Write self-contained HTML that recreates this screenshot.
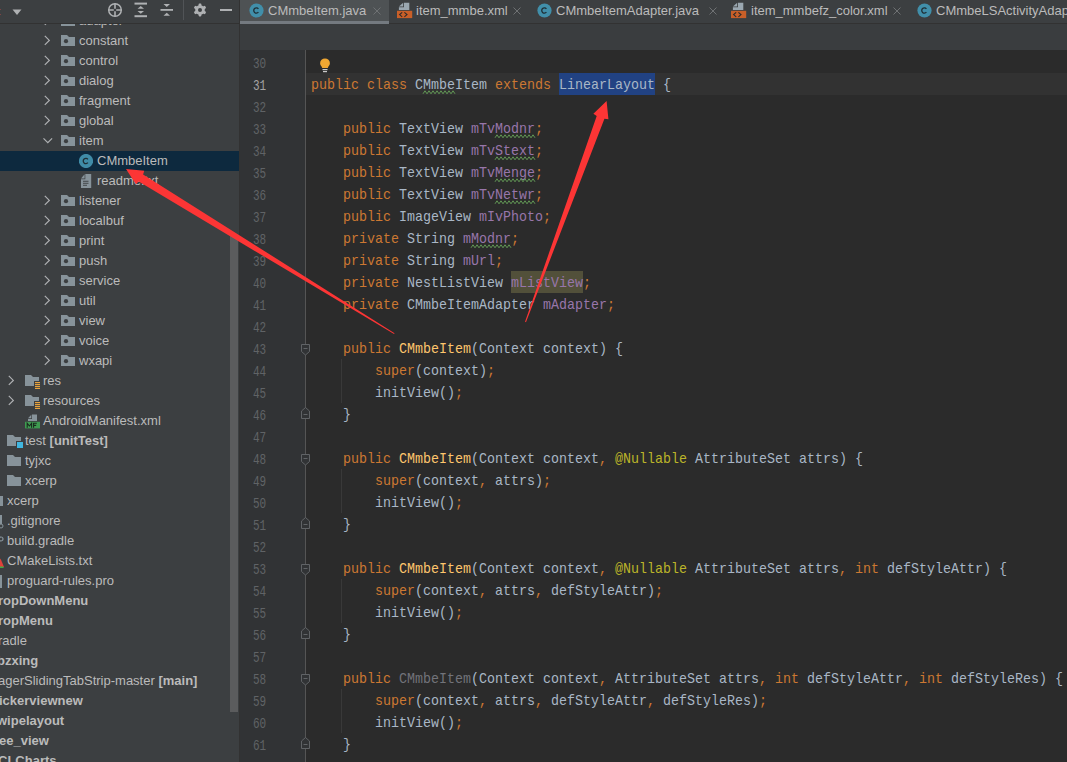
<!DOCTYPE html>
<html><head><meta charset="utf-8"><style>
html,body{margin:0;padding:0;}
body{width:1067px;height:762px;overflow:hidden;position:relative;background:#3C3F41;font-family:"Liberation Sans",sans-serif;}
.a{position:absolute;}
.t{position:absolute;height:20px;line-height:20px;font-size:13px;color:#BBBBBB;white-space:nowrap;}
.tt{position:absolute;top:0;height:21px;line-height:21px;font-size:13px;color:#BBBBBB;white-space:nowrap;}
.ln{position:absolute;left:253px;margin-top:1px;height:22px;line-height:22px;font-family:"Liberation Mono",monospace;font-size:11px;transform:scaleY(1.3);transform-origin:0 7px;}
.cl{position:absolute;left:311px;height:22px;line-height:22px;padding-top:1.5px;transform:scaleY(1.08);transform-origin:0 16px;font-family:"Liberation Mono",monospace;font-size:13.33px;white-space:pre;}
.cl span{display:inline-block;height:22px;}
</style></head><body>
<div class="a" style="left:0;top:0;width:239px;height:762px;background:#3C3F41"></div>
<svg class="a" style="left:43px;top:15px" width="10" height="12" viewBox="0 0 10 12"><path d="M1.8 0.9 L6.3 5.4 L1.8 9.9" fill="none" stroke="#AFB1B3" stroke-width="1.2"/></svg><svg class="a" style="left:61px;top:15px" width="15" height="12" viewBox="0 0 15 12"><path d="M0 0 H6 L8 2 H14 V11 H0 Z" fill="#87939A"/><circle cx="5" cy="6.2" r="2.1" fill="#3C3F41"/></svg><div class="t" style="left:79px;top:11px;">adapter</div><svg class="a" style="left:43px;top:35px" width="10" height="12" viewBox="0 0 10 12"><path d="M1.8 0.9 L6.3 5.4 L1.8 9.9" fill="none" stroke="#AFB1B3" stroke-width="1.2"/></svg><svg class="a" style="left:61px;top:35px" width="15" height="12" viewBox="0 0 15 12"><path d="M0 0 H6 L8 2 H14 V11 H0 Z" fill="#87939A"/><circle cx="5" cy="6.2" r="2.1" fill="#3C3F41"/></svg><div class="t" style="left:79px;top:31px;">constant</div><svg class="a" style="left:43px;top:55px" width="10" height="12" viewBox="0 0 10 12"><path d="M1.8 0.9 L6.3 5.4 L1.8 9.9" fill="none" stroke="#AFB1B3" stroke-width="1.2"/></svg><svg class="a" style="left:61px;top:55px" width="15" height="12" viewBox="0 0 15 12"><path d="M0 0 H6 L8 2 H14 V11 H0 Z" fill="#87939A"/><circle cx="5" cy="6.2" r="2.1" fill="#3C3F41"/></svg><div class="t" style="left:79px;top:51px;">control</div><svg class="a" style="left:43px;top:75px" width="10" height="12" viewBox="0 0 10 12"><path d="M1.8 0.9 L6.3 5.4 L1.8 9.9" fill="none" stroke="#AFB1B3" stroke-width="1.2"/></svg><svg class="a" style="left:61px;top:75px" width="15" height="12" viewBox="0 0 15 12"><path d="M0 0 H6 L8 2 H14 V11 H0 Z" fill="#87939A"/><circle cx="5" cy="6.2" r="2.1" fill="#3C3F41"/></svg><div class="t" style="left:79px;top:71px;">dialog</div><svg class="a" style="left:43px;top:95px" width="10" height="12" viewBox="0 0 10 12"><path d="M1.8 0.9 L6.3 5.4 L1.8 9.9" fill="none" stroke="#AFB1B3" stroke-width="1.2"/></svg><svg class="a" style="left:61px;top:95px" width="15" height="12" viewBox="0 0 15 12"><path d="M0 0 H6 L8 2 H14 V11 H0 Z" fill="#87939A"/><circle cx="5" cy="6.2" r="2.1" fill="#3C3F41"/></svg><div class="t" style="left:79px;top:91px;">fragment</div><svg class="a" style="left:43px;top:115px" width="10" height="12" viewBox="0 0 10 12"><path d="M1.8 0.9 L6.3 5.4 L1.8 9.9" fill="none" stroke="#AFB1B3" stroke-width="1.2"/></svg><svg class="a" style="left:61px;top:115px" width="15" height="12" viewBox="0 0 15 12"><path d="M0 0 H6 L8 2 H14 V11 H0 Z" fill="#87939A"/><circle cx="5" cy="6.2" r="2.1" fill="#3C3F41"/></svg><div class="t" style="left:79px;top:111px;">global</div><svg class="a" style="left:42px;top:136px" width="12" height="10" viewBox="0 0 12 10"><path d="M1.5 2.3 L5.8 6.6 L10.1 2.3" fill="none" stroke="#AFB1B3" stroke-width="1.2"/></svg><svg class="a" style="left:61px;top:135px" width="15" height="12" viewBox="0 0 15 12"><path d="M0 0 H6 L8 2 H14 V11 H0 Z" fill="#87939A"/><circle cx="5" cy="6.2" r="2.1" fill="#3C3F41"/></svg><div class="t" style="left:79px;top:131px;">item</div><div class="a" style="left:0;top:151px;width:239px;height:20px;background:#0D293E"></div><svg class="a" style="left:79px;top:154px" width="14" height="14" viewBox="0 0 14 14"><circle cx="7" cy="7" r="7.1" fill="#408CA8"/><path d="M8.9 5.4 A2.6 2.6 0 1 0 8.9 8.6" fill="none" stroke="#1F2F36" stroke-width="1.3"/></svg><div class="t" style="left:97px;top:151px;">CMmbeItem</div><svg class="a" style="left:81px;top:174px" width="11" height="15" viewBox="0 0 11 15"><path d="M4.3 0 H10.2 V13.9 H0 V5.2 H4.3 Z" fill="#87939A"/><path d="M0 4.4 L3.6 0.3 V4.4 Z" fill="#87939A"/><g fill="#3C3F41"><rect x="2" y="6.8" width="5.5" height="0.9"/><rect x="2" y="8.8" width="5.5" height="0.9"/><rect x="2" y="10.8" width="4" height="0.9"/></g></svg><div class="t" style="left:97px;top:171px;">readme.txt</div><svg class="a" style="left:43px;top:195px" width="10" height="12" viewBox="0 0 10 12"><path d="M1.8 0.9 L6.3 5.4 L1.8 9.9" fill="none" stroke="#AFB1B3" stroke-width="1.2"/></svg><svg class="a" style="left:61px;top:195px" width="15" height="12" viewBox="0 0 15 12"><path d="M0 0 H6 L8 2 H14 V11 H0 Z" fill="#87939A"/><circle cx="5" cy="6.2" r="2.1" fill="#3C3F41"/></svg><div class="t" style="left:79px;top:191px;">listener</div><svg class="a" style="left:43px;top:215px" width="10" height="12" viewBox="0 0 10 12"><path d="M1.8 0.9 L6.3 5.4 L1.8 9.9" fill="none" stroke="#AFB1B3" stroke-width="1.2"/></svg><svg class="a" style="left:61px;top:215px" width="15" height="12" viewBox="0 0 15 12"><path d="M0 0 H6 L8 2 H14 V11 H0 Z" fill="#87939A"/><circle cx="5" cy="6.2" r="2.1" fill="#3C3F41"/></svg><div class="t" style="left:79px;top:211px;">localbuf</div><svg class="a" style="left:43px;top:235px" width="10" height="12" viewBox="0 0 10 12"><path d="M1.8 0.9 L6.3 5.4 L1.8 9.9" fill="none" stroke="#AFB1B3" stroke-width="1.2"/></svg><svg class="a" style="left:61px;top:235px" width="15" height="12" viewBox="0 0 15 12"><path d="M0 0 H6 L8 2 H14 V11 H0 Z" fill="#87939A"/><circle cx="5" cy="6.2" r="2.1" fill="#3C3F41"/></svg><div class="t" style="left:79px;top:231px;">print</div><svg class="a" style="left:43px;top:255px" width="10" height="12" viewBox="0 0 10 12"><path d="M1.8 0.9 L6.3 5.4 L1.8 9.9" fill="none" stroke="#AFB1B3" stroke-width="1.2"/></svg><svg class="a" style="left:61px;top:255px" width="15" height="12" viewBox="0 0 15 12"><path d="M0 0 H6 L8 2 H14 V11 H0 Z" fill="#87939A"/><circle cx="5" cy="6.2" r="2.1" fill="#3C3F41"/></svg><div class="t" style="left:79px;top:251px;">push</div><svg class="a" style="left:43px;top:275px" width="10" height="12" viewBox="0 0 10 12"><path d="M1.8 0.9 L6.3 5.4 L1.8 9.9" fill="none" stroke="#AFB1B3" stroke-width="1.2"/></svg><svg class="a" style="left:61px;top:275px" width="15" height="12" viewBox="0 0 15 12"><path d="M0 0 H6 L8 2 H14 V11 H0 Z" fill="#87939A"/><circle cx="5" cy="6.2" r="2.1" fill="#3C3F41"/></svg><div class="t" style="left:79px;top:271px;">service</div><svg class="a" style="left:43px;top:295px" width="10" height="12" viewBox="0 0 10 12"><path d="M1.8 0.9 L6.3 5.4 L1.8 9.9" fill="none" stroke="#AFB1B3" stroke-width="1.2"/></svg><svg class="a" style="left:61px;top:295px" width="15" height="12" viewBox="0 0 15 12"><path d="M0 0 H6 L8 2 H14 V11 H0 Z" fill="#87939A"/><circle cx="5" cy="6.2" r="2.1" fill="#3C3F41"/></svg><div class="t" style="left:79px;top:291px;">util</div><svg class="a" style="left:43px;top:315px" width="10" height="12" viewBox="0 0 10 12"><path d="M1.8 0.9 L6.3 5.4 L1.8 9.9" fill="none" stroke="#AFB1B3" stroke-width="1.2"/></svg><svg class="a" style="left:61px;top:315px" width="15" height="12" viewBox="0 0 15 12"><path d="M0 0 H6 L8 2 H14 V11 H0 Z" fill="#87939A"/><circle cx="5" cy="6.2" r="2.1" fill="#3C3F41"/></svg><div class="t" style="left:79px;top:311px;">view</div><svg class="a" style="left:43px;top:335px" width="10" height="12" viewBox="0 0 10 12"><path d="M1.8 0.9 L6.3 5.4 L1.8 9.9" fill="none" stroke="#AFB1B3" stroke-width="1.2"/></svg><svg class="a" style="left:61px;top:335px" width="15" height="12" viewBox="0 0 15 12"><path d="M0 0 H6 L8 2 H14 V11 H0 Z" fill="#87939A"/><circle cx="5" cy="6.2" r="2.1" fill="#3C3F41"/></svg><div class="t" style="left:79px;top:331px;">voice</div><svg class="a" style="left:43px;top:355px" width="10" height="12" viewBox="0 0 10 12"><path d="M1.8 0.9 L6.3 5.4 L1.8 9.9" fill="none" stroke="#AFB1B3" stroke-width="1.2"/></svg><svg class="a" style="left:61px;top:355px" width="15" height="12" viewBox="0 0 15 12"><path d="M0 0 H6 L8 2 H14 V11 H0 Z" fill="#87939A"/><circle cx="5" cy="6.2" r="2.1" fill="#3C3F41"/></svg><div class="t" style="left:79px;top:351px;">wxapi</div><svg class="a" style="left:7px;top:375px" width="10" height="12" viewBox="0 0 10 12"><path d="M1.8 0.9 L6.3 5.4 L1.8 9.9" fill="none" stroke="#AFB1B3" stroke-width="1.2"/></svg><svg class="a" style="left:25px;top:375px" width="16" height="14" viewBox="0 0 16 14"><path d="M0 0 H6 L8 2 H14 V11 H0 Z" fill="#87939A"/><rect x="9" y="6" width="7" height="8" fill="#3C3F41"/><g fill="#E8A33D"><rect x="10" y="7" width="5" height="1.2"/><rect x="10" y="9" width="5" height="1.2"/><rect x="10" y="11" width="5" height="1.2"/><rect x="10" y="13" width="5" height="1"/></g></svg><div class="t" style="left:43px;top:371px;">res</div><svg class="a" style="left:7px;top:395px" width="10" height="12" viewBox="0 0 10 12"><path d="M1.8 0.9 L6.3 5.4 L1.8 9.9" fill="none" stroke="#AFB1B3" stroke-width="1.2"/></svg><svg class="a" style="left:25px;top:395px" width="16" height="14" viewBox="0 0 16 14"><path d="M0 0 H6 L8 2 H14 V11 H0 Z" fill="#87939A"/><rect x="9" y="6" width="7" height="8" fill="#3C3F41"/><g fill="#E8A33D"><rect x="10" y="7" width="5" height="1.2"/><rect x="10" y="9" width="5" height="1.2"/><rect x="10" y="11" width="5" height="1.2"/><rect x="10" y="13" width="5" height="1"/></g></svg><div class="t" style="left:43px;top:391px;">resources</div><svg class="a" style="left:25px;top:414px" width="16" height="15" viewBox="0 0 16 15"><path d="M7 0.5 H12 V7 H3 V5 H7 Z" fill="#87939A"/><path d="M3 4.3 L6.3 0.8 V4.3 Z" fill="#87939A"/><rect x="0" y="7.8" width="15" height="6.6" fill="#3E9A50"/><path d="M2.2 13.8 V9.3 L4.4 12 L6.6 9.3 V13.8 M8.6 13.8 V9.3 H11.8 M8.6 11.4 H11.2" fill="none" stroke="#1A2A1E" stroke-width="1.1"/></svg><div class="t" style="left:43px;top:411px;">AndroidManifest.xml</div><svg class="a" style="left:7px;top:435px" width="16" height="14" viewBox="0 0 16 14"><path d="M0 0 H6 L8 2 H14 V11 H0 Z" fill="#87939A"/><rect x="9" y="6" width="7" height="8" fill="#3C3F41"/><rect x="10" y="7" width="6" height="6" fill="#40B6E0"/></svg><div class="t" style="left:25px;top:431px;">test <b>[unitTest]</b></div><svg class="a" style="left:7px;top:455px" width="15" height="12" viewBox="0 0 15 12"><path d="M0 0 H6 L8 2 H14 V11 H0 Z" fill="#87939A"/></svg><div class="t" style="left:25px;top:451px;">tyjxc</div><svg class="a" style="left:7px;top:475px" width="15" height="12" viewBox="0 0 15 12"><path d="M0 0 H6 L8 2 H14 V11 H0 Z" fill="#87939A"/></svg><div class="t" style="left:25px;top:471px;">xcerp</div><svg class="a" style="left:0px;top:496px" width="3" height="11" viewBox="0 0 3 11"><rect x="0" y="0" width="3" height="10" fill="#87939A"/></svg><div class="t" style="left:7px;top:491px;">xcerp</div><svg class="a" style="left:0px;top:515px" width="4" height="14" viewBox="0 0 4 14"><rect x="0" y="0" width="2" height="9" fill="#87939A"/><circle cx="1" cy="11" r="2" fill="none" stroke="#87939A" stroke-width="1"/></svg><div class="t" style="left:7px;top:511px;">.gitignore</div><svg class="a" style="left:0px;top:536px" width="4" height="10" viewBox="0 0 4 10"><circle cx="1" cy="3" r="2" fill="none" stroke="#87939A" stroke-width="1.2"/></svg><div class="t" style="left:7px;top:531px;">build.gradle</div><svg class="a" style="left:0px;top:558px" width="5" height="11" viewBox="0 0 5 11"><path d="M-4 9 L0.5 0.5 L4 9 Z" fill="#E0413B"/><path d="M-4 8.5 H3 L4 10 H-4 Z" fill="#3DAA45"/></svg><div class="t" style="left:7px;top:551px;">CMakeLists.txt</div><svg class="a" style="left:0px;top:575px" width="3" height="13" viewBox="0 0 3 13"><rect x="0" y="0" width="2" height="13" fill="#87939A"/></svg><div class="t" style="left:7px;top:571px;">proguard-rules.pro</div><div class="t" style="left:-2px;top:591px;font-weight:bold;">ropDownMenu</div><div class="t" style="left:-2px;top:611px;font-weight:bold;">ropMenu</div><div class="t" style="left:-2px;top:631px;">radle</div><div class="t" style="left:-3px;top:651px;font-weight:bold;">bzxing</div><div class="t" style="left:-2px;top:671px;">agerSlidingTabStrip-master <b>[main]</b></div><div class="t" style="left:-1px;top:691px;font-weight:bold;">ickerviewnew</div><div class="t" style="left:-3px;top:711px;font-weight:bold;">wipelayout</div><div class="t" style="left:-1px;top:731px;font-weight:bold;">ee_view</div><div class="t" style="left:-2px;top:751px;font-weight:bold;">CLCharts</div>
<div class="a" style="left:230px;top:236px;width:8px;height:476px;background:#5B5C5D"></div>

<div class="a" style="left:0;top:0;width:239px;height:23px;background:#3C3F41"></div>
<div class="a" style="left:0;top:23px;width:239px;height:1px;background:#323232"></div>
<div class="a" style="left:0;top:9px;width:1px;height:1px;background:#7a4444"></div><div class="a" style="left:0;top:14px;width:1px;height:1px;background:#7a4444"></div>
<svg class="a" style="left:12px;top:9px" width="10" height="7" viewBox="0 0 10 7"><path d="M0.5 0.5 H9.5 L5 6 Z" fill="#AFB1B3"/></svg>
<svg class="a" style="left:107px;top:2px" width="16" height="16" viewBox="0 0 16 16"><circle cx="8" cy="8" r="6.3" fill="none" stroke="#AFB1B3" stroke-width="1.5"/><path d="M8 1.5 V6.8 M8 9.2 V14.5 M1.5 8 H6.8 M9.2 8 H14.5" stroke="#AFB1B3" stroke-width="1.6"/></svg>
<svg class="a" style="left:134px;top:2px" width="14" height="16" viewBox="0 0 14 16"><rect x="0.5" y="0.6" width="12.5" height="2" fill="#AFB1B3"/><rect x="0.5" y="13.2" width="12.5" height="2" fill="#AFB1B3"/><path d="M3.5 6.8 L6.75 4 L10 6.8 Z M3.5 9 L6.75 11.8 L10 9 Z" fill="#AFB1B3"/></svg>
<svg class="a" style="left:160px;top:2px" width="14" height="16" viewBox="0 0 14 16"><rect x="0.5" y="7" width="12.5" height="1.8" fill="#AFB1B3"/><path d="M3.5 2 L6.75 5 L10 2 Z M3.5 13.8 L6.75 10.8 L10 13.8 Z" fill="#AFB1B3"/></svg>
<div class="a" style="left:183px;top:0;width:1px;height:20px;background:#515457"></div>
<svg class="a" style="left:193px;top:3px" width="14" height="14" viewBox="0 0 14 14"><g fill="#AFB1B3"><circle cx="7" cy="7" r="4.8"/><rect x="5.6" y="0.6" width="2.8" height="12.8" rx="0.8"/><rect x="5.6" y="0.6" width="2.8" height="12.8" rx="0.8" transform="rotate(60 7 7)"/><rect x="5.6" y="0.6" width="2.8" height="12.8" rx="0.8" transform="rotate(120 7 7)"/></g><circle cx="7" cy="7" r="2" fill="#3C3F41"/></svg>
<div class="a" style="left:220px;top:9px;width:12px;height:2px;background:#AFB1B3"></div>

<div class="a" style="left:239px;top:0;width:1px;height:762px;background:#323232"></div>

<div class="a" style="left:240px;top:0;width:827px;height:24px;background:#3C3F41"></div>
<div class="a" style="left:389px;top:23px;width:678px;height:1px;background:#323232"></div>
<div class="a" style="left:240px;top:0;width:149px;height:21px;background:#4E5254"></div>
<div class="a" style="left:240px;top:21px;width:149px;height:3px;background:#747A80"></div>
<svg class="a" style="left:249px;top:3px" width="15" height="15" viewBox="-0.5 -0.5 15 15"><circle cx="7" cy="7" r="7.1" fill="#418FAA"/><path d="M8.9 5.4 A2.6 2.6 0 1 0 8.9 8.6" fill="none" stroke="#1F2F36" stroke-width="1.3"/></svg><div class="tt" style="left:268px">CMmbeItem.java</div><svg class="a" style="left:373px;top:7px" width="8" height="8" viewBox="0 0 8 8"><path d="M0.5 0.5 L7.5 7.5 M7.5 0.5 L0.5 7.5" stroke="#6E7173" stroke-width="1"/></svg><svg class="a" style="left:397px;top:2px" width="16" height="17" viewBox="0 0 16 17"><path d="M7 0.7 H12.3 V8 H1.9 V5.3 H7 Z" fill="#9AA7B0"/><path d="M1.9 4.6 L6.2 0.7 V4.6 Z" fill="#9AA7B0"/><rect x="0" y="8.8" width="15.2" height="7.3" fill="#C95F28"/><path d="M5.2 10.3 L2.6 12.6 L5.2 14.9 M7.4 10.3 L10 12.6 L7.4 14.9" fill="none" stroke="#2B2B2B" stroke-width="1.1"/></svg><div class="tt" style="left:416px">item_mmbe.xml</div><svg class="a" style="left:513px;top:7px" width="8" height="8" viewBox="0 0 8 8"><path d="M0.5 0.5 L7.5 7.5 M7.5 0.5 L0.5 7.5" stroke="#6E7173" stroke-width="1"/></svg><svg class="a" style="left:537px;top:3px" width="15" height="15" viewBox="-0.5 -0.5 15 15"><circle cx="7" cy="7" r="7.1" fill="#418FAA"/><path d="M8.9 5.4 A2.6 2.6 0 1 0 8.9 8.6" fill="none" stroke="#1F2F36" stroke-width="1.3"/></svg><div class="tt" style="left:556px">CMmbeItemAdapter.java</div><svg class="a" style="left:709px;top:7px" width="8" height="8" viewBox="0 0 8 8"><path d="M0.5 0.5 L7.5 7.5 M7.5 0.5 L0.5 7.5" stroke="#6E7173" stroke-width="1"/></svg><svg class="a" style="left:731px;top:2px" width="16" height="17" viewBox="0 0 16 17"><path d="M7 0.7 H12.3 V8 H1.9 V5.3 H7 Z" fill="#9AA7B0"/><path d="M1.9 4.6 L6.2 0.7 V4.6 Z" fill="#9AA7B0"/><rect x="0" y="8.8" width="15.2" height="7.3" fill="#C95F28"/><path d="M5.2 10.3 L2.6 12.6 L5.2 14.9 M7.4 10.3 L10 12.6 L7.4 14.9" fill="none" stroke="#2B2B2B" stroke-width="1.1"/></svg><div class="tt" style="left:751px">item_mmbefz_color.xml</div><svg class="a" style="left:893px;top:7px" width="8" height="8" viewBox="0 0 8 8"><path d="M0.5 0.5 L7.5 7.5 M7.5 0.5 L0.5 7.5" stroke="#6E7173" stroke-width="1"/></svg><svg class="a" style="left:917px;top:3px" width="15" height="15" viewBox="-0.5 -0.5 15 15"><circle cx="7" cy="7" r="7.1" fill="#418FAA"/><path d="M8.9 5.4 A2.6 2.6 0 1 0 8.9 8.6" fill="none" stroke="#1F2F36" stroke-width="1.3"/></svg><div class="tt" style="left:936px">CMmbeLSActivityAdapter.java</div>

<div class="a" style="left:240px;top:24px;width:827px;height:26px;background:#3A3D3F"></div>
<div class="a" style="left:240px;top:50px;width:65px;height:712px;background:#313335"></div>
<div class="a" style="left:306px;top:50px;width:761px;height:712px;background:#2B2B2B"></div>
<div class="a" style="left:306px;top:73px;width:761px;height:22px;background:#323232"></div>
<div class="a" style="left:305px;top:50px;width:1px;height:712px;background:#555555"></div>
<div class="a" style="left:559px;top:73px;width:96px;height:22px;background:#214283"></div>
<div class="a" style="left:511px;top:271px;width:72px;height:22px;background:#52503A"></div>

<div class="a" style="left:341px;top:359px;width:1px;height:44px;background:#393939"></div><div class="a" style="left:341px;top:469px;width:1px;height:44px;background:#393939"></div><div class="a" style="left:341px;top:579px;width:1px;height:44px;background:#393939"></div><div class="a" style="left:341px;top:689px;width:1px;height:44px;background:#393939"></div>
<svg class="a" style="left:300px;top:344px" width="11" height="12" viewBox="0 0 11 12"><path d="M1.5 0.5 H9.5 V7.5 L5.5 11 L1.5 7.5 Z" fill="#313335" stroke="#606366" stroke-width="1"/><path d="M3.5 4.5 H7.5" stroke="#606366" stroke-width="1"/></svg><svg class="a" style="left:300px;top:454px" width="11" height="12" viewBox="0 0 11 12"><path d="M1.5 0.5 H9.5 V7.5 L5.5 11 L1.5 7.5 Z" fill="#313335" stroke="#606366" stroke-width="1"/><path d="M3.5 4.5 H7.5" stroke="#606366" stroke-width="1"/></svg><svg class="a" style="left:300px;top:564px" width="11" height="12" viewBox="0 0 11 12"><path d="M1.5 0.5 H9.5 V7.5 L5.5 11 L1.5 7.5 Z" fill="#313335" stroke="#606366" stroke-width="1"/><path d="M3.5 4.5 H7.5" stroke="#606366" stroke-width="1"/></svg><svg class="a" style="left:300px;top:674px" width="11" height="12" viewBox="0 0 11 12"><path d="M1.5 0.5 H9.5 V7.5 L5.5 11 L1.5 7.5 Z" fill="#313335" stroke="#606366" stroke-width="1"/><path d="M3.5 4.5 H7.5" stroke="#606366" stroke-width="1"/></svg><svg class="a" style="left:300px;top:407px" width="11" height="12" viewBox="0 0 11 12"><path d="M1.5 11.5 H9.5 V4 L5.5 0.5 L1.5 4 Z" fill="#313335" stroke="#606366" stroke-width="1"/><path d="M3.5 7.5 H7.5" stroke="#606366" stroke-width="1"/></svg><svg class="a" style="left:300px;top:517px" width="11" height="12" viewBox="0 0 11 12"><path d="M1.5 11.5 H9.5 V4 L5.5 0.5 L1.5 4 Z" fill="#313335" stroke="#606366" stroke-width="1"/><path d="M3.5 7.5 H7.5" stroke="#606366" stroke-width="1"/></svg><svg class="a" style="left:300px;top:627px" width="11" height="12" viewBox="0 0 11 12"><path d="M1.5 11.5 H9.5 V4 L5.5 0.5 L1.5 4 Z" fill="#313335" stroke="#606366" stroke-width="1"/><path d="M3.5 7.5 H7.5" stroke="#606366" stroke-width="1"/></svg><svg class="a" style="left:300px;top:737px" width="11" height="12" viewBox="0 0 11 12"><path d="M1.5 11.5 H9.5 V4 L5.5 0.5 L1.5 4 Z" fill="#313335" stroke="#606366" stroke-width="1"/><path d="M3.5 7.5 H7.5" stroke="#606366" stroke-width="1"/></svg>
<div class="ln" style="top:51px;color:#606366">30</div><div class="ln" style="top:73px;color:#A4A3A3">31</div><div class="cl" style="top:73px"><span style="color:#CC7832">public class </span><span style="color:#A9B7C6">CMmbeItem </span><span style="color:#CC7832">extends </span><span style="color:#A9B7C6">LinearLayout</span><span style="color:#A9B7C6"> {</span></div><div class="ln" style="top:95px;color:#606366">32</div><div class="ln" style="top:117px;color:#606366">33</div><div class="cl" style="top:117px"><span style="color:#A9B7C6">    </span><span style="color:#CC7832">public </span><span style="color:#A9B7C6">TextView </span><span style="color:#9876AA">mTvModnr</span><span style="color:#CC7832">;</span></div><div class="ln" style="top:139px;color:#606366">34</div><div class="cl" style="top:139px"><span style="color:#A9B7C6">    </span><span style="color:#CC7832">public </span><span style="color:#A9B7C6">TextView </span><span style="color:#9876AA">mTvStext</span><span style="color:#CC7832">;</span></div><div class="ln" style="top:161px;color:#606366">35</div><div class="cl" style="top:161px"><span style="color:#A9B7C6">    </span><span style="color:#CC7832">public </span><span style="color:#A9B7C6">TextView </span><span style="color:#9876AA">mTvMenge</span><span style="color:#CC7832">;</span></div><div class="ln" style="top:183px;color:#606366">36</div><div class="cl" style="top:183px"><span style="color:#A9B7C6">    </span><span style="color:#CC7832">public </span><span style="color:#A9B7C6">TextView </span><span style="color:#9876AA">mTvNetwr</span><span style="color:#CC7832">;</span></div><div class="ln" style="top:205px;color:#606366">37</div><div class="cl" style="top:205px"><span style="color:#A9B7C6">    </span><span style="color:#CC7832">public </span><span style="color:#A9B7C6">ImageView </span><span style="color:#9876AA">mIvPhoto</span><span style="color:#CC7832">;</span></div><div class="ln" style="top:227px;color:#606366">38</div><div class="cl" style="top:227px"><span style="color:#A9B7C6">    </span><span style="color:#CC7832">private </span><span style="color:#A9B7C6">String </span><span style="color:#9876AA">mModnr</span><span style="color:#CC7832">;</span></div><div class="ln" style="top:249px;color:#606366">39</div><div class="cl" style="top:249px"><span style="color:#A9B7C6">    </span><span style="color:#CC7832">private </span><span style="color:#A9B7C6">String </span><span style="color:#9876AA">mUrl</span><span style="color:#CC7832">;</span></div><div class="ln" style="top:271px;color:#606366">40</div><div class="cl" style="top:271px"><span style="color:#A9B7C6">    </span><span style="color:#CC7832">private </span><span style="color:#A9B7C6">NestListView </span><span style="color:#9876AA">mListView</span><span style="color:#CC7832">;</span></div><div class="ln" style="top:293px;color:#606366">41</div><div class="cl" style="top:293px"><span style="color:#A9B7C6">    </span><span style="color:#CC7832">private </span><span style="color:#A9B7C6">CMmbeItemAdapter </span><span style="color:#9876AA">mAdapter</span><span style="color:#CC7832">;</span></div><div class="ln" style="top:315px;color:#606366">42</div><div class="ln" style="top:337px;color:#606366">43</div><div class="cl" style="top:337px"><span style="color:#A9B7C6">    </span><span style="color:#CC7832">public </span><span style="color:#FFC66D">CMmbeItem</span><span style="color:#A9B7C6">(Context context) {</span></div><div class="ln" style="top:359px;color:#606366">44</div><div class="cl" style="top:359px"><span style="color:#A9B7C6">        </span><span style="color:#CC7832">super</span><span style="color:#A9B7C6">(context)</span><span style="color:#CC7832">;</span></div><div class="ln" style="top:381px;color:#606366">45</div><div class="cl" style="top:381px"><span style="color:#A9B7C6">        initView()</span><span style="color:#CC7832">;</span></div><div class="ln" style="top:403px;color:#606366">46</div><div class="cl" style="top:403px"><span style="color:#A9B7C6">    }</span></div><div class="ln" style="top:425px;color:#606366">47</div><div class="ln" style="top:447px;color:#606366">48</div><div class="cl" style="top:447px"><span style="color:#A9B7C6">    </span><span style="color:#CC7832">public </span><span style="color:#FFC66D">CMmbeItem</span><span style="color:#A9B7C6">(Context context</span><span style="color:#CC7832">, </span><span style="color:#BBB529">@Nullable </span><span style="color:#A9B7C6">AttributeSet attrs) {</span></div><div class="ln" style="top:469px;color:#606366">49</div><div class="cl" style="top:469px"><span style="color:#A9B7C6">        </span><span style="color:#CC7832">super</span><span style="color:#A9B7C6">(context</span><span style="color:#CC7832">, </span><span style="color:#A9B7C6">attrs)</span><span style="color:#CC7832">;</span></div><div class="ln" style="top:491px;color:#606366">50</div><div class="cl" style="top:491px"><span style="color:#A9B7C6">        initView()</span><span style="color:#CC7832">;</span></div><div class="ln" style="top:513px;color:#606366">51</div><div class="cl" style="top:513px"><span style="color:#A9B7C6">    }</span></div><div class="ln" style="top:535px;color:#606366">52</div><div class="ln" style="top:557px;color:#606366">53</div><div class="cl" style="top:557px"><span style="color:#A9B7C6">    </span><span style="color:#CC7832">public </span><span style="color:#FFC66D">CMmbeItem</span><span style="color:#A9B7C6">(Context context</span><span style="color:#CC7832">, </span><span style="color:#BBB529">@Nullable </span><span style="color:#A9B7C6">AttributeSet attrs</span><span style="color:#CC7832">, int </span><span style="color:#A9B7C6">defStyleAttr) {</span></div><div class="ln" style="top:579px;color:#606366">54</div><div class="cl" style="top:579px"><span style="color:#A9B7C6">        </span><span style="color:#CC7832">super</span><span style="color:#A9B7C6">(context</span><span style="color:#CC7832">, </span><span style="color:#A9B7C6">attrs</span><span style="color:#CC7832">, </span><span style="color:#A9B7C6">defStyleAttr)</span><span style="color:#CC7832">;</span></div><div class="ln" style="top:601px;color:#606366">55</div><div class="cl" style="top:601px"><span style="color:#A9B7C6">        initView()</span><span style="color:#CC7832">;</span></div><div class="ln" style="top:623px;color:#606366">56</div><div class="cl" style="top:623px"><span style="color:#A9B7C6">    }</span></div><div class="ln" style="top:645px;color:#606366">57</div><div class="ln" style="top:667px;color:#606366">58</div><div class="cl" style="top:667px"><span style="color:#A9B7C6">    </span><span style="color:#CC7832">public </span><span style="color:#72737A">CMmbeItem</span><span style="color:#A9B7C6">(Context context</span><span style="color:#CC7832">, </span><span style="color:#A9B7C6">AttributeSet attrs</span><span style="color:#CC7832">, int </span><span style="color:#A9B7C6">defStyleAttr</span><span style="color:#CC7832">, int </span><span style="color:#A9B7C6">defStyleRes) {</span></div><div class="ln" style="top:689px;color:#606366">59</div><div class="cl" style="top:689px"><span style="color:#A9B7C6">        </span><span style="color:#CC7832">super</span><span style="color:#A9B7C6">(context</span><span style="color:#CC7832">, </span><span style="color:#A9B7C6">attrs</span><span style="color:#CC7832">, </span><span style="color:#A9B7C6">defStyleAttr</span><span style="color:#CC7832">, </span><span style="color:#A9B7C6">defStyleRes)</span><span style="color:#CC7832">;</span></div><div class="ln" style="top:711px;color:#606366">60</div><div class="cl" style="top:711px"><span style="color:#A9B7C6">        initView()</span><span style="color:#CC7832">;</span></div><div class="ln" style="top:733px;color:#606366">61</div><div class="cl" style="top:733px"><span style="color:#A9B7C6">    }</span></div>
<svg class="a" style="left:422px;top:90px" width="34" height="5" viewBox="-1 0 34 5"><path d="M0 3.8 L2 0.8 L4 3.8 L6 0.8 L8 3.8 L10 0.8 L12 3.8 L14 0.8 L16 3.8 L18 0.8 L20 3.8 L22 0.8 L24 3.8 L26 0.8 L28 3.8 L30 0.8 L32 3.8" fill="none" stroke="#629755" stroke-width="1"/></svg><svg class="a" style="left:494px;top:134px" width="42" height="5" viewBox="-1 0 42 5"><path d="M0 3.8 L2 0.8 L4 3.8 L6 0.8 L8 3.8 L10 0.8 L12 3.8 L14 0.8 L16 3.8 L18 0.8 L20 3.8 L22 0.8 L24 3.8 L26 0.8 L28 3.8 L30 0.8 L32 3.8 L34 0.8 L36 3.8 L38 0.8 L40 3.8" fill="none" stroke="#629755" stroke-width="1"/></svg><svg class="a" style="left:494px;top:156px" width="42" height="5" viewBox="-1 0 42 5"><path d="M0 3.8 L2 0.8 L4 3.8 L6 0.8 L8 3.8 L10 0.8 L12 3.8 L14 0.8 L16 3.8 L18 0.8 L20 3.8 L22 0.8 L24 3.8 L26 0.8 L28 3.8 L30 0.8 L32 3.8 L34 0.8 L36 3.8 L38 0.8 L40 3.8" fill="none" stroke="#629755" stroke-width="1"/></svg><svg class="a" style="left:494px;top:178px" width="42" height="5" viewBox="-1 0 42 5"><path d="M0 3.8 L2 0.8 L4 3.8 L6 0.8 L8 3.8 L10 0.8 L12 3.8 L14 0.8 L16 3.8 L18 0.8 L20 3.8 L22 0.8 L24 3.8 L26 0.8 L28 3.8 L30 0.8 L32 3.8 L34 0.8 L36 3.8 L38 0.8 L40 3.8" fill="none" stroke="#629755" stroke-width="1"/></svg><svg class="a" style="left:494px;top:200px" width="42" height="5" viewBox="-1 0 42 5"><path d="M0 3.8 L2 0.8 L4 3.8 L6 0.8 L8 3.8 L10 0.8 L12 3.8 L14 0.8 L16 3.8 L18 0.8 L20 3.8 L22 0.8 L24 3.8 L26 0.8 L28 3.8 L30 0.8 L32 3.8 L34 0.8 L36 3.8 L38 0.8 L40 3.8" fill="none" stroke="#629755" stroke-width="1"/></svg><svg class="a" style="left:470px;top:244px" width="42" height="5" viewBox="-1 0 42 5"><path d="M0 3.8 L2 0.8 L4 3.8 L6 0.8 L8 3.8 L10 0.8 L12 3.8 L14 0.8 L16 3.8 L18 0.8 L20 3.8 L22 0.8 L24 3.8 L26 0.8 L28 3.8 L30 0.8 L32 3.8 L34 0.8 L36 3.8 L38 0.8 L40 3.8" fill="none" stroke="#629755" stroke-width="1"/></svg>
<svg class="a" style="left:319px;top:57px" width="12" height="16" viewBox="0 0 12 16"><path d="M6 1.4 A4.9 4.9 0 0 1 10.9 6.3 C10.9 8.5 9.2 9.3 8.8 11 H3.2 C2.8 9.3 1.1 8.5 1.1 6.3 A4.9 4.9 0 0 1 6 1.4 Z" fill="#F0A732"/><rect x="3.5" y="12" width="5" height="1.2" fill="#C9C9C9"/><rect x="4" y="14" width="4" height="1.2" fill="#C9C9C9"/></svg>
<svg class="a" style="left:0;top:0" width="1067" height="762" viewBox="0 0 1067 762"><path d="M126.00 168.90 L144.25 170.71 L143.10 174.49 L394.56 333.17 L394.04 334.03 L138.73 181.62 L135.88 184.35 Z" fill="#FC3535"/><path d="M606.60 101.00 L608.43 119.25 L604.43 118.84 L525.97 322.17 L525.03 321.83 L596.71 116.01 L593.41 113.73 Z" fill="#FC3535"/></svg>
</body></html>
